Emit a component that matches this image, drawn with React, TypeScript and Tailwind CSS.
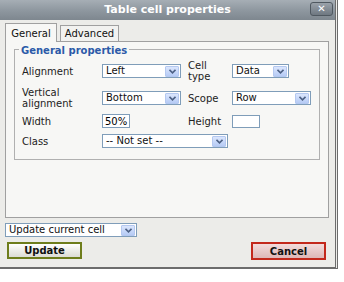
import React from 'react';

const font = { fontFamily: '"DejaVu Sans", Verdana, sans-serif' };

function Arrow() {
  return (
    <span className="flex h-[11px] w-[14px] shrink-0 items-center justify-center rounded-[1px] border border-[#b4c8f0] bg-gradient-to-b from-[#dbe6fd] to-[#b6cbf5]">
      <svg width="7" height="5" viewBox="0 0 7 5">
        <path d="M0.5 0.8 L3.5 3.8 L6.5 0.8" fill="none" stroke="#4d6185" strokeWidth="1.6" />
      </svg>
    </span>
  );
}

function Select({ value, width }: { value: string; width: string }) {
  return (
    <div className={`flex h-[14px] items-center justify-between border border-[#7f9db9] bg-white pl-[3px] pr-[1px] ${width}`}>
      <span className="leading-none text-[#111]">{value}</span>
      <Arrow />
    </div>
  );
}

function Label({ children, w = 'w-[80px]' }: { children: React.ReactNode; w?: string }) {
  return <div className={`${w} shrink-0 leading-[11px] text-[#222]`}>{children}</div>;
}

export default function App() {
  return (
    <div className="h-[282px] w-[344px] overflow-hidden bg-white text-[10px]" style={font}>
      <div className="h-[269px] w-[338px] border-r-[3px] border-b-2 border-double border-[#6c6c6c] bg-[#ecece9]">
        <div className="relative flex h-[20px] items-center justify-center bg-gradient-to-b from-[#a6aeb5] via-[#8f98a0] to-[#7e878f]">
          <span className="text-[11px] font-bold text-white">Table cell properties</span>
          <div className="absolute right-[2px] top-[2px] flex h-[14px] w-[23px] items-center justify-center rounded-[3px] border border-[#4f5860] bg-gradient-to-b from-[#9aa2aa] to-[#6f7881]">
            <span className="text-[10px] font-bold leading-none text-white">✕</span>
          </div>
        </div>

        <div className="flex items-end pl-[5px] pt-[3px]">
          <div className="relative z-10 -mb-px flex h-[19px] w-[52px] items-center justify-center border border-b-0 border-[#a0a0a0] bg-[#f7f7f5] text-[#111]">
            General
          </div>
          <div className="ml-[3px] flex h-[16px] w-[59px] items-center justify-center border border-b-0 border-[#a0a0a0] bg-[#f2f2f0] text-[#111]">
            Advanced
          </div>
        </div>

        <div className="ml-[5px] h-[177px] w-[324px] border border-[#a0a0a0] bg-[#f7f7f5] px-[8px] pt-[7px]">
          <div className="relative border border-[#b0b0b0] px-[7px] pt-[10px] pb-[11px]">
            <span className="absolute -top-[7px] left-[4px] bg-[#f7f7f5] px-[2px] text-[10px] font-bold text-[#2b5aa8]">
              General properties
            </span>
            <div className="flex h-[22px] items-center">
              <Label>Alignment</Label>
              <Select value="Left" width="w-[79px]" />
              <div className="ml-[7px] flex items-center">
                <Label w="w-[44px]">Cell<br />type</Label>
                <Select value="Data" width="w-[57px]" />
              </div>
            </div>
            <div className="mt-[5px] flex h-[22px] items-center">
              <Label>Vertical<br />alignment</Label>
              <Select value="Bottom" width="w-[79px]" />
              <div className="ml-[7px] flex items-center">
                <Label w="w-[44px]">Scope</Label>
                <Select value="Row" width="w-[79px]" />
              </div>
            </div>
            <div className="mt-[5px] flex h-[14px] items-center">
              <Label>Width</Label>
              <div className="flex h-[14px] w-[28px] items-center border border-[#7f9db9] bg-white pl-[2px]">50%</div>
              <div className="ml-[58px] flex items-center">
                <Label w="w-[44px]">Height</Label>
                <div className="h-[13px] w-[28px] border border-[#7f9db9] bg-white" />
              </div>
            </div>
            <div className="mt-[6px] flex h-[14px] items-center">
              <Label>Class</Label>
              <Select value="-- Not set --" width="w-[126px]" />
            </div>
          </div>
        </div>

        <div className="ml-[5px] mt-[5px]">
          <Select value="Update current cell" width="w-[132px]" />
        </div>
        <div className="mt-[5px] flex justify-between pl-[7px] pr-[9px]">
          <div className="flex h-[17px] w-[75px] items-center justify-center border-2 border-[#6e7d1c] bg-gradient-to-b from-white to-[#dcdcd4] font-bold text-[#111]">
            Update
          </div>
          <div className="flex h-[18px] w-[75px] items-center justify-center border-2 border-[#c3281c] bg-gradient-to-b from-[#f3dcdc] to-[#ddb8b8] font-bold text-[#111]">
            Cancel
          </div>
        </div>
      </div>
    </div>
  );
}
